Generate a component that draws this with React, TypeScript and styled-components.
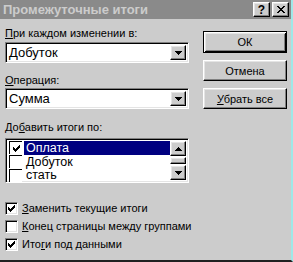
import React from "react";
import styled, { createGlobalStyle } from "styled-components";

const Global = createGlobalStyle`
  html, body { margin: 0; padding: 0; background: #7fd8d8; }
  body { font-family: "Liberation Sans", Arial, sans-serif; font-size: 11px; }
  * { box-sizing: border-box; }
`;

const FACE = "#cccccc";

const Window = styled.div`
  width: 293px;
  height: 262px;
  display: flex;
  flex-direction: column;
  background: ${FACE};
  border-right: 2px solid #9fe8e8;
  border-bottom: 2px solid #202020;
  overflow: hidden;
`;

const TitleBar = styled.div`
  height: 19px;
  background: #8a8a8a;
  display: flex;
  align-items: center;
  justify-content: space-between;
  padding: 0 2px 0 3px;
  flex-shrink: 0;
`;

const TitleText = styled.span`
  color: #cccccc;
  font-weight: bold;
  font-size: 13px;
  letter-spacing: 0;
`;

const TitleButtons = styled.div`
  display: flex;
  gap: 2px;
`;

const bevelOut = `
  border-style: solid;
  border-width: 1px;
  border-color: #ffffff #000000 #000000 #ffffff;
  box-shadow: inset -1px -1px 0 #808080, inset 1px 1px 0 #e4e4e4;
`;

const TitleButton = styled.div`
  width: 17px;
  height: 15px;
  background: ${FACE};
  ${bevelOut}
  display: flex;
  align-items: center;
  justify-content: center;
  font-weight: bold;
  font-size: 12px;
  color: #000;
  line-height: 1;
`;

const Body = styled.div`
  flex: 1;
  display: flex;
  padding: 8px 0 0 5px;
`;

const LeftCol = styled.div`
  width: 184px;
  display: flex;
  flex-direction: column;
`;

const RightCol = styled.div`
  margin-left: 14px;
  padding-top: 4px;
  width: 84px;
  display: flex;
  flex-direction: column;
  gap: 7px;
`;

const Label = styled.div<{ $mt?: number }>`
  margin-top: ${(p) => p.$mt ?? 0}px;
  height: 13px;
  line-height: 13px;
  color: #000;
  white-space: nowrap;
`;

const U = styled.span`
  text-decoration: underline;
  text-underline-offset: 1px;
`;

const sunken = `
  border-style: solid;
  border-width: 1px;
  border-color: #808080 #ffffff #ffffff #808080;
  box-shadow: inset 1px 1px 0 #000000, inset -1px -1px 0 #e4e4e4;
`;

const Combo = styled.div<{ $mt?: number }>`
  margin-top: ${(p) => p.$mt ?? 0}px;
  height: 21px;
  background: #fff;
  ${sunken}
  display: flex;
  align-items: stretch;
  padding: 2px;
`;

const ComboText = styled.div`
  flex: 1;
  padding-left: 1px;
  line-height: 16px;
  font-size: 13px;
  color: #000;
`;

const ArrowButton = styled.div<{ $h?: number }>`
  width: 16px;
  height: ${(p) => (p.$h ? `${p.$h}px` : "auto")};
  background: ${FACE};
  ${bevelOut}
  display: flex;
  align-items: center;
  justify-content: center;
  flex-shrink: 0;
`;

const ListBox = styled.div`
  margin-top: 4px;
  height: 45px;
  background: #fff;
  ${sunken}
  display: flex;
  padding: 2px;
`;

const ListItems = styled.div`
  flex: 1;
  display: flex;
  flex-direction: column;
`;

const ListRow = styled.div`
  height: 13.7px;
  display: flex;
  align-items: center;
  padding-left: 1px;
`;

const ListText = styled.div<{ $sel?: boolean }>`
  flex: 1;
  height: 100%;
  margin-left: 2px;
  padding-left: 2px;
  line-height: 14px;
  font-size: 12.5px;
  background: ${(p) => (p.$sel ? "#000080" : "transparent")};
  color: ${(p) => (p.$sel ? "#fff" : "#000")};
`;

const ScrollBar = styled.div`
  width: 16px;
  display: flex;
  flex-direction: column;
`;

const Thumb = styled.div`
  flex: 1;
  margin: 1px 0;
  background: ${FACE};
  ${bevelOut}
`;

const Box = styled.div<{ $flat?: boolean }>`
  width: 13px;
  height: 13px;
  background: #fff;
  ${(p) =>
    p.$flat
      ? `border-style: solid; border-width: 1px 0 0 1px; border-color: #000;`
      : `border-style: solid; border-width: 1px; border-color: #808080 #ffffff #ffffff #808080; box-shadow: inset 1px 1px 0 #000, inset -1px -1px 0 #e4e4e4;`}
  display: flex;
  align-items: center;
  justify-content: center;
  flex-shrink: 0;
`;

const Checks = styled.div`
  margin-top: 16px;
  display: flex;
  flex-direction: column;
`;

const CheckRow = styled.div`
  height: 18px;
  display: flex;
  align-items: center;
  gap: 4px;
  white-space: nowrap;
  color: #000;
`;

const Button = styled.div<{ $default?: boolean }>`
  height: ${(p) => (p.$default ? 22 : 21)}px;
  background: ${FACE};
  display: flex;
  align-items: center;
  justify-content: center;
  color: #000;
  ${(p) =>
    p.$default
      ? `border: 1px solid #000; box-shadow: inset 1px 1px 0 #fff, inset -1px -1px 0 #000, inset 2px 2px 0 #e4e4e4, inset -2px -2px 0 #808080;`
      : `border-style: solid; border-width: 1px; border-color: #ffffff #000000 #000000 #ffffff; box-shadow: inset -1px -1px 0 #808080, inset 1px 1px 0 #e4e4e4;`}
`;

const Check = () => (
  <svg width="7" height="7" viewBox="0 0 7 7" shapeRendering="crispEdges">
    <path d="M6 0h1v3h-1zM5 1h1v3h-1zM4 2h1v3h-1zM3 3h1v3h-1zM2 4h1v3h-1zM1 3h1v3h-1zM0 2h1v3h-1z" fill="#000" />
  </svg>
);

const Down = () => (
  <svg width="7" height="4" viewBox="0 0 7 4" shapeRendering="crispEdges">
    <path d="M0 0h7v1H0zM1 1h5v1H1zM2 2h3v1H2zM3 3h1v1H3z" fill="#000" />
  </svg>
);

const Up = () => (
  <svg width="7" height="4" viewBox="0 0 7 4" shapeRendering="crispEdges">
    <path d="M3 0h1v1H3zM2 1h3v1H2zM1 2h5v1H1zM0 3h7v1H0z" fill="#000" />
  </svg>
);

const CloseGlyph = () => (
  <svg width="8" height="7" viewBox="0 0 8 7" shapeRendering="crispEdges">
    <path d="M0 0h2v1H0zM6 0h2v1H6zM1 1h2v1H1zM5 1h2v1H5zM2 2h4v1H2zM3 3h2v1H3zM2 4h4v1H2zM1 5h2v1H1zM5 5h2v1H5zM0 6h2v1H0zM6 6h2v1H6z" fill="#000" />
  </svg>
);

const items = [
  { text: "Оплата", checked: true, sel: true },
  { text: "Добуток", checked: false, sel: false },
  { text: "стать", checked: false, sel: false },
];

const options = [
  { pre: "", u: "З", post: "аменить текущие итоги", checked: true },
  { pre: "", u: "К", post: "онец страницы между группами", checked: false },
  { pre: "Ито", u: "г", post: "и под данными", checked: true },
];

export default function App() {
  return (
    <>
      <Global />
      <Window>
        <TitleBar>
          <TitleText>Промежуточные итоги</TitleText>
          <TitleButtons>
            <TitleButton>?</TitleButton>
            <TitleButton>
              <CloseGlyph />
            </TitleButton>
          </TitleButtons>
        </TitleBar>
        <Body>
          <LeftCol>
            <Label>
              <U>П</U>ри каждом изменении в:
            </Label>
            <Combo $mt={2}>
              <ComboText>Добуток</ComboText>
              <ArrowButton>
                <Down />
              </ArrowButton>
            </Combo>
            <Label $mt={11}>
              <U>О</U>перация:
            </Label>
            <Combo $mt={1}>
              <ComboText>Сумма</ComboText>
              <ArrowButton>
                <Down />
              </ArrowButton>
            </Combo>
            <Label $mt={12}>
              До<U>б</U>авить итоги по:
            </Label>
            <ListBox>
              <ListItems>
                {items.map((it) => (
                  <ListRow key={it.text}>
                    <Box $flat>{it.checked && <Check />}</Box>
                    <ListText $sel={it.sel}>{it.text}</ListText>
                  </ListRow>
                ))}
              </ListItems>
              <ScrollBar>
                <ArrowButton $h={15}>
                  <Up />
                </ArrowButton>
                <Thumb />
                <ArrowButton $h={15}>
                  <Down />
                </ArrowButton>
              </ScrollBar>
            </ListBox>
            <Checks>
              {options.map((o) => (
                <CheckRow key={o.post}>
                  <Box>{o.checked && <Check />}</Box>
                  <span>
                    {o.pre}
                    <U>{o.u}</U>
                    {o.post}
                  </span>
                </CheckRow>
              ))}
            </Checks>
          </LeftCol>
          <RightCol>
            <Button $default>ОК</Button>
            <Button>Отмена</Button>
            <Button>
              <span>
                <U>У</U>брать все
              </span>
            </Button>
          </RightCol>
        </Body>
      </Window>
    </>
  );
}
